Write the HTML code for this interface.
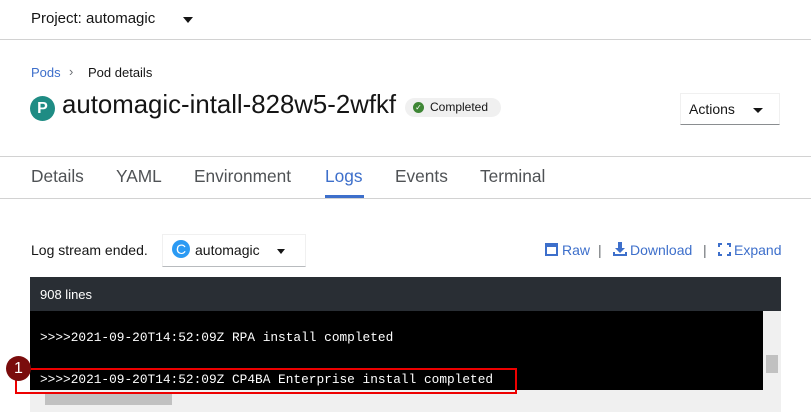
<!DOCTYPE html>
<html><head><style>
body{margin:0;width:811px;height:412px;overflow:hidden;background:#fff;font-family:"Liberation Sans",sans-serif;position:relative;color:#151515}
.a{position:absolute;white-space:nowrap}
.line{position:absolute;left:0;width:811px;height:1px;background:#d2d2d2}
.mono{font-family:"Liberation Mono",monospace;color:#fff;font-size:12.8px}
</style></head><body>
<div class="a" style="left:31px;top:10px;font-size:15px;color:#151515">Project: automagic</div>
<div class="a" style="left:183px;top:17px;width:0;height:0;border-left:5px solid transparent;border-right:5px solid transparent;border-top:6px solid #151515"></div>
<div class="line" style="top:39px"></div>
<div class="a" style="left:31px;top:65px;font-size:13px;color:#3d6fcb">Pods</div>
<div class="a" style="left:69px;top:64px;font-size:13px;color:#6a6e73">›</div>
<div class="a" style="left:88px;top:65px;font-size:13px;color:#151515">Pod details</div>
<div class="a" style="left:30px;top:96px;width:25px;height:25px;border-radius:50%;background:#1f8c84;color:#fff;font-weight:bold;font-size:16px;text-align:center;line-height:25px">P</div>
<div class="a" style="left:62px;top:91px;font-size:25.8px;color:#151515">automagic-intall-828w5-2wfkf</div>
<div class="a" style="left:405px;top:98px;width:96px;height:19px;border-radius:10px;background:#f0f0f0"></div>
<div class="a" style="left:413px;top:102px;width:11px;height:11px;border-radius:50%;background:#3e8635;color:#fff;font-size:8px;text-align:center;line-height:11px">✓</div>
<div class="a" style="left:430px;top:100px;font-size:12px;color:#151515">Completed</div>
<div class="a" style="left:680px;top:93px;width:100px;height:32px;border:1px solid #f0f0f0;border-bottom:1px solid #8a8d90;box-sizing:border-box"></div>
<div class="a" style="left:689px;top:101px;font-size:14px;color:#151515">Actions</div>
<div class="a" style="left:753px;top:108px;width:0;height:0;border-left:5px solid transparent;border-right:5px solid transparent;border-top:5px solid #151515"></div>
<div class="line" style="top:156px"></div>
<div class="line" style="top:198px"></div>
<div class="a" style="top:166px;left:31px;font-size:17.3px;color:#4f5255">Details</div>
<div class="a" style="top:166px;left:116px;font-size:17.3px;color:#4f5255">YAML</div>
<div class="a" style="top:166px;left:194px;font-size:17.3px;color:#4f5255">Environment</div>
<div class="a" style="top:166px;left:325px;font-size:17.3px;color:#3d6fcb">Logs</div>
<div class="a" style="top:195px;left:325px;width:39px;height:3px;background:#3d6fcb"></div>
<div class="a" style="top:166px;left:395px;font-size:17.3px;color:#4f5255">Events</div>
<div class="a" style="top:166px;left:480px;font-size:17.3px;color:#4f5255">Terminal</div>
<div class="a" style="left:31px;top:242px;font-size:14px;color:#151515">Log stream ended.</div>
<div class="a" style="left:162px;top:234px;width:144px;height:33px;border:1px solid #f0f0f0;border-bottom:1px solid #b8bbbe;box-sizing:border-box"></div>
<div class="a" style="left:172px;top:240px;width:18px;height:18px;border-radius:50%;background:#2b9af3;color:#fff;font-size:14px;text-align:center;line-height:18px">C</div>
<div class="a" style="left:195px;top:242px;font-size:14px;color:#151515">automagic</div>
<div class="a" style="left:277px;top:249px;width:0;height:0;border-left:4px solid transparent;border-right:4px solid transparent;border-top:5px solid #151515"></div>
<div class="a" style="left:545px;top:243px;width:13px;height:13px;border:2px solid #3d6fcb;box-sizing:border-box;border-top-width:4px"></div>
<div class="a" style="left:562px;top:242px;font-size:14px;color:#3d6fcb">Raw</div>
<div class="a" style="left:598px;top:242px;font-size:14px;color:#6a6e73">|</div>
<svg class="a" style="left:613px;top:242px" width="14" height="14" viewBox="0 0 14 14"><path d="M5 0h4v6h3l-5 5-5-5h3z M0 10h2v2h10v-2h2v4H0z" fill="#3d6fcb"/></svg>
<div class="a" style="left:630px;top:242px;font-size:14px;color:#3d6fcb">Download</div>
<div class="a" style="left:703px;top:242px;font-size:14px;color:#6a6e73">|</div>
<svg class="a" style="left:718px;top:243px" width="13" height="13" viewBox="0 0 13 13"><path d="M0 0h4v2H2v2H0z M9 0h4v4h-2V2H9z M0 9h2v2h2v2H0z M11 9h2v4H9v-2h2z" fill="#3d6fcb"/></svg>
<div class="a" style="left:734px;top:242px;font-size:14px;color:#3d6fcb">Expand</div>
<div class="a" style="left:30px;top:277px;width:751px;height:34px;background:#292e34"></div>
<div class="a" style="left:40px;top:287px;font-size:13px;color:#fff">908 lines</div>
<div class="a" style="left:30px;top:311px;width:751px;height:101px;background:#000"></div>
<div class="a" style="left:763px;top:311px;width:18px;height:101px;background:#f0f0f0"></div>
<div class="a" style="left:766px;top:355px;width:12px;height:18px;background:#c1c1c1"></div>
<div class="a" style="left:30px;top:390px;width:733px;height:22px;background:#f0f0f0"></div>
<div class="a" style="left:45px;top:392px;width:127px;height:13px;background:#c1c1c1"></div>
<div class="a mono" style="left:40px;top:330px">&gt;&gt;&gt;&gt;2021-09-20T14:52:09Z RPA install completed</div>
<div class="a mono" style="left:40px;top:372px">&gt;&gt;&gt;&gt;2021-09-20T14:52:09Z CP4BA Enterprise install completed</div>
<div class="a" style="left:15px;top:368px;width:502px;height:26px;border:2px solid #e00;box-sizing:border-box"></div>
<div class="a" style="left:6px;top:356px;width:25px;height:25px;border-radius:50%;background:#7a0c0c;color:#fff;font-size:16px;text-align:center;line-height:25px">1</div>
</body></html>
